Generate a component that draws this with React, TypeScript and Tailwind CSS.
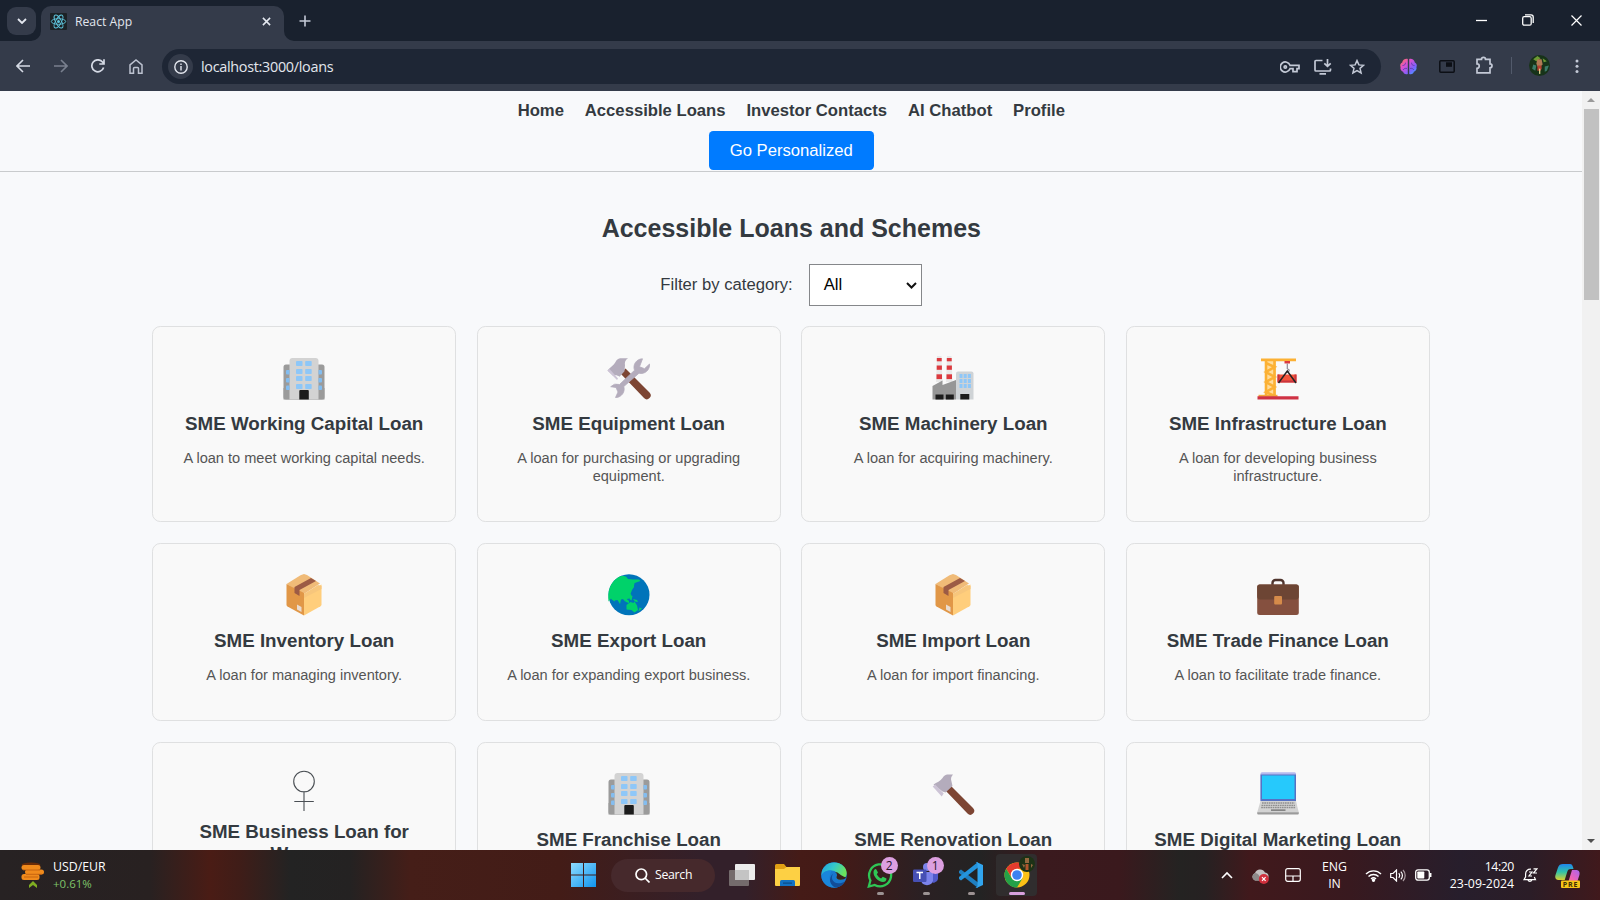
import type { ReactNode } from "react";

const UI = "font-['Open_Sans','Noto_Sans',sans-serif]";

/* ---------- card illustrations (42 x 42 box) ---------- */

function Art({ children }: { children: ReactNode }) {
  return (
    <svg viewBox="0 0 42 42" className="block h-[42px] w-[42px] overflow-visible">
      {children}
    </svg>
  );
}

function Office() {
  return (
    <Art>
      <rect x="0.5" y="6.5" width="41" height="35" rx="2.5" fill="#9b9b9b" />
      <path d="M0.5 30h41v11.5h-41z" fill="#9b9b9b" />
      <path d="M6.5 41.500V3a3 3 0 0 1 3-3h23a3 3 0 0 1 3 3v38.500z" fill="#d3d3d3" />
      {[3, 11, 18, 26].map((y) => (
        <g key={y} fill="#8ec7f8">
          <rect x="13" y={y} width="6.500" height="5" rx="0.800" />
          <rect x="22.200" y={y} width="6.500" height="5" rx="0.800" />
        </g>
      ))}
      {[12, 20, 27.5].map((y) => (
        <g key={y} fill="#83bdf0">
          <path d={`M6.500 ${y}H4a1 1 0 0 0-1 1v2.500a1 1 0 0 0 1 1h2.500z`} />
          <path d={`M35.500 ${y}H38a1 1 0 0 1 1 1v2.500a1 1 0 0 1-1 1h-2.500z`} />
        </g>
      ))}
      <path d="M16.300 41.500v-8.500a1 1 0 0 1 1-1h7.500a1 1 0 0 1 1 1v8.500z" fill="#1c1c1c" />
    </Art>
  );
}

function Tools() {
  return (
    <Art>
      <path d="M12.500 15.500l5-5 24 24a3.800 3.800 0 0 1-5.500 5.500z" fill="#7d4533" />
      <path d="M12 0.300h8c-3 2-3.500 4.500-3 7l-.500 6-5 5.500c-2-1.500-4-2-6.500-1L-.500 12.500c2.500-3 6.500-5.500 8-8.500 1-2 2.500-3.500 4.500-3.700z" fill="#b4acbc" />
      <path d="M-.5 12.500l2-1.500 8.500 9.500-1 1.500z" fill="#cdc4d6" />
      <path d="M34.500.8a8.500 8.500 0 0 0-8 11.500L11.500 26.500a8.300 8.300 0 0 0-8.800 2.200l5.300.800 2 4.500-2.500 5.500a8.500 8.500 0 0 0 8.300-11L31 15.200A8.500 8.500 0 0 0 41.500 6l-5 4.700-5-2z" fill="#b4acbc" stroke="#b4acbc" strokeWidth=".8" />
    </Art>
  );
}

function Factory() {
  return (
    <Art>
      <path d="M4 24L5-2h4.500l1 26zM14 24l1-26h4.500l1 26z" fill="#e9e9e9" />
      {[5, 15].map((x) => (
        <g key={x} fill="#dc3a3f">
          <rect x={x - 0.2} y="0" width="4.900" height="3.300" />
          <rect x={x - 0.3} y="7.500" width="5.200" height="4.300" />
          <rect x={x - 0.5} y="16.300" width="5.500" height="4.800" />
        </g>
      ))}
      <path d="M24 41.500V15.500a2 2 0 0 1 2-2h13.500a2 2 0 0 1 2 2v26z" fill="#cfd3d6" />
      <g fill="#8ec7f8">
        {[16, 21, 26].map((y) => (
          <g key={y}>
            <rect x="27.500" y={y} width="3" height="4" />
            <rect x="31.700" y={y} width="3" height="4" />
            <rect x="35.900" y={y} width="3" height="4" />
          </g>
        ))}
      </g>
      <path d="M.5 41.500V28l10-5.500v4.500l13.500-5v19.500z" fill="#969696" />
      <path d="M3.500 36.500h8v5h-8zM13.800 36.500h8v5h-8zM28.300 36h9v5.500h-9z" fill="#1c1c1c" />
    </Art>
  );
}

function Crane() {
  return (
    <Art>
      <path d="M8 2h11v37H8z" fill="#ffdc9a" />
      <path
        d="M9 2v36M17.500 2v36M9 5l8.500 4L9 14l8.500 5L9 24l8.500 5L9 34l8.500 4"
        fill="none"
        stroke="#fcb134"
        strokeWidth="2.600"
      />
      <path d="M4 .5h35v2.800H4z" fill="#fcb134" />
      <path d="M1.500 36.800h19v2h-19z" fill="#f3a83a" />
      <path d="M27.500 3h5.500v2.500h-5.500z" fill="#dc3a3f" />
      <path d="M30.300 5.500v5.500m0 0c3 0 2 4-1 3" stroke="#8e8794" strokeWidth="1.200" fill="none" />
      <path d="M20.500 16.500h19v8h-19z" fill="#f4553b" />
      <path d="M20.500 16.500h2v8h-2zM37.500 16.500h2v8h-2zM22.500 22.500h15v2h-15z" fill="#c9353f" />
      <path d="M21.500 25L30.300 13l8.700 12" stroke="#242424" strokeWidth="1.500" fill="none" />
      <path d="M.5 38.300h41v3.200H.5z" fill="#cf3244" />
    </Art>
  );
}

function Parcel() {
  return (
    <Art>
      <path d="M21 0l3 1 13 8.500L21 20 3.500 10l14-8.700z" fill="#f0bb78" />
      <path d="M3.500 10L21 19v22.500L4.500 32.500a2 2 0 0 1-1-1.700z" fill="#e19747" />
      <path d="M38.500 10.500L21 20v21.500l16.500-9.300a2 2 0 0 0 1-1.700z" fill="#ffce7c" />
      <path d="M28 4l5 3-16.500 9v6l-5-3v-6z" fill="#9c5b45" />
      <path d="M21 20l14-9 3.500 1v3L21 24z" fill="#f7c67c" />
      <path d="M14 30.500l4.500 2.500v5L14 35.500z" fill="#eadcd0" />
    </Art>
  );
}

function Globe() {
  return (
    <Art>
      <circle cx="21" cy="20.700" r="20.500" fill="#0074ba" />
      <path
        d="M10 3.500C13.500 1 17 2 18 2.500l2 2.500 5 .5 6 0 1.500 1.500-4.500 1.500-2 1 0 3.500-2 3-1.500 4 1 1-2 3.500-3 .5-1 3-2.500-3-2 .5-1 4.500-2.500-4-3 .5-3.500-2-2.500 3C-.5 17 2 8.500 10 3.500z"
        fill="#00d26a"
      />
      <path d="M25 8.500l1.500 1-1 4-1.500-1zM17.500 24l3.500 3v2l-3-1zM22 21l2.500 1-1 4.500-2-1.500zM2.500 24.500l5-1-1 4zM25 25l4 1 1 2-3-.5z" fill="#00d26a" />
      <path d="M18.500 31l4-3 3 1 1-1.500 2.500 4 1 4.500-3.500 2.500-3-2.500-5-.5zM31.500 33.500l2.500 1-3.500 3z" fill="#00d26a" />
    </Art>
  );
}

function Briefcase() {
  return (
    <Art>
      <path d="M15.500 12V9a3 3 0 0 1 3-3h5a3 3 0 0 1 3 3v3" fill="none" stroke="#50352e" strokeWidth="2.400" />
      <rect x=".2" y="10.500" width="41.600" height="30.500" rx="2.500" fill="#85503f" />
      <path d="M.2 13a2.500 2.500 0 0 1 2.500-2.500h36.600a2.500 2.500 0 0 1 2.500 2.500v9.500a3 3 0 0 1-3 3H3.200a3 3 0 0 1-3-3z" fill="#6d4534" />
      <rect x="17.200" y="22" width="7.800" height="8.500" rx="1" fill="#d68b4a" />
    </Art>
  );
}

function Female() {
  return (
    <Art>
      <g fill="none" stroke="#4a4f54" strokeWidth="1.100">
        <circle cx="21" cy="8.500" r="10.300" />
        <path d="M21 18.800V38M11.300 28.500h19.500" />
      </g>
    </Art>
  );
}

function Hammer() {
  return (
    <Art>
      <path d="M13 17l5.500-4.500L41 35a3.800 3.800 0 0 1-5.500 5.500z" fill="#7d4533" />
      <path d="M15 1.500h6c-2 2.500-2.500 4-1.500 7l1 4.500-7 6.500-3-1-9-7c3-2 7-3.500 9-6.500 1-2 2.500-3 4.500-3.500z" fill="#b4acbc" />
      <path d="M.7 13.500l2.500-2 8.500 9-2 3z" fill="#cdc4d6" />
    </Art>
  );
}

function Laptop() {
  return (
    <Art>
      <rect x="3.500" y="-.8" width="35.500" height="29" rx="1.500" fill="#b5b9ee" />
      <path d="M3.500 1.500H39V28H3.500z" fill="#5572c4" />
      <path d="M5 2.500h32.500V26H5z" fill="#26c9fc" />
      <path d="M3.500 28h35.500l2.800 11.500H.2z" fill="#d3d3d3" />
      <path d="M5 30h32.500M4.500 32.300h33.500M4.200 34.500h34" stroke="#8f8f8f" strokeWidth="1.300" strokeDasharray="1.700 .6" />
      <path d="M14 36.300h14.500v1.700H14z" fill="#858585" />
      <path d="M.2 39.300h41.600v1.200a1 1 0 0 1-1 1H1.200a1 1 0 0 1-1-1z" fill="#9b9b9b" />
    </Art>
  );
}

/* ---------- browser chrome ---------- */

function ReactLogo() {
  return (
    <svg viewBox="0 0 17 17" className="h-[17px] w-[17px]">
      <rect width="17" height="17" rx="1" fill="#1c2226" />
      <g fill="none" stroke="#5fc6de" strokeWidth=".9">
        <ellipse cx="8.500" cy="8.500" rx="7.200" ry="2.800" />
        <ellipse cx="8.500" cy="8.500" rx="7.200" ry="2.800" transform="rotate(60 8.500 8.500)" />
        <ellipse cx="8.500" cy="8.500" rx="7.200" ry="2.800" transform="rotate(120 8.500 8.500)" />
      </g>
      <circle cx="8.500" cy="8.500" r="1.500" fill="#5fc6de" />
    </svg>
  );
}

function TabStrip() {
  return (
    <div className="flex h-[41px] items-start bg-[#19212e]">
      <div className="ml-[7px] mt-[7px] flex h-[28px] w-[29px] items-center justify-center rounded-[9px] bg-[#343b4a]">
        <svg viewBox="0 0 10 6" className="h-[6px] w-[10px]" fill="none" stroke="#e4e8f0" strokeWidth="1.800">
          <path d="M1 1l4 4 4-4" />
        </svg>
      </div>
      <div className="relative ml-[5px] mt-[6px] flex h-[35px] w-[243px] items-center rounded-t-[10px] bg-[#343b4a] pb-[5px] pl-[9px]">
        <svg viewBox="0 0 10 10" className="absolute -left-[10px] bottom-0 h-[10px] w-[10px]">
          <path d="M10 0v10H0A10 10 0 0 0 10 0z" fill="#343b4a" />
        </svg>
        <svg viewBox="0 0 10 10" className="absolute -right-[10px] bottom-0 h-[10px] w-[10px]">
          <path d="M0 0v10h10A10 10 0 0 1 0 0z" fill="#343b4a" />
        </svg>
        <ReactLogo />
        <span className="ml-[8px] flex-1 pt-px text-[12.2px] leading-4 text-[#e3e6ee]">React App</span>
        <svg viewBox="0 0 10 10" className="mr-[13px] h-[9px] w-[9px]" stroke="#e4e8f0" strokeWidth="1.700">
          <path d="M1 1l8 8M9 1L1 9" />
        </svg>
      </div>
      <svg viewBox="0 0 12 12" className="ml-[15px] mt-[15px] h-[12px] w-[12px]" stroke="#c3c9d6" strokeWidth="1.600">
        <path d="M6 .5v11M.5 6h11" />
      </svg>
      <div className="ml-auto mr-[18px] mt-[14px] flex items-center">
        <svg viewBox="0 0 11 12" className="mr-[35px] h-[12px] w-[11px]" stroke="#fff" strokeWidth="1.300">
          <path d="M0 6.500h11" />
        </svg>
        <svg viewBox="0 0 12 12" className="mr-[37px] h-[12px] w-[12px]" fill="none" stroke="#fff" strokeWidth="1.300">
          <rect x=".7" y="2.700" width="8.500" height="8.500" rx="1.500" />
          <path d="M3 .8h6a2.200 2.200 0 0 1 2.200 2.200v6" />
        </svg>
        <svg viewBox="0 0 11 11" className="h-[11px] w-[11px]" stroke="#fff" strokeWidth="1.200">
          <path d="M.5.5l10 10M10.500.5l-10 10" />
        </svg>
      </div>
    </div>
  );
}

function Toolbar() {
  return (
    <div className="flex h-[50px] items-start bg-[#343b4a]">
      <div className="flex h-[50px] w-[162px] items-start pl-[16px] pt-[18px]">
        <svg viewBox="0 0 14 14" className="h-[14px] w-[14px]" fill="none" stroke="#d5dae5" strokeWidth="1.600">
          <path d="M14 7H1.500M7 1L1 7l6 6" />
        </svg>
        <svg viewBox="0 0 14 14" className="ml-[24px] h-[14px] w-[14px]" fill="none" stroke="#79808f" strokeWidth="1.600">
          <path d="M0 7h12.500M7 1l6 6-6 6" />
        </svg>
        <svg viewBox="0 0 14 14" className="ml-[23px] h-[14px] w-[14px]" fill="none" stroke="#d5dae5" strokeWidth="1.700">
          <path d="M12.600 8.500A6 6 0 1 1 11.500 3l1.500 1.800M13 .2V5H8.300" />
        </svg>
        <svg viewBox="0 0 14 15" className="ml-[24px] h-[15px] w-[14px]" fill="none" stroke="#bcc2d0" strokeWidth="1.500">
          <path d="M1 14.200V5.800L7 1l6 4.800v8.400H9.500V9.500a1 1 0 0 0-1-1h-3a1 1 0 0 0-1 1v4.700z" />
        </svg>
      </div>
      <div className="mt-[8px] flex h-[35px] w-[1219px] items-center rounded-full bg-[#1e2635] pl-[6px] pr-[16px]">
        <div className="flex h-[25px] w-[25px] items-center justify-center rounded-full bg-[#343b4a]">
          <svg viewBox="0 0 14 14" className="h-[14px] w-[14px]" fill="none" stroke="#e3e6ee" strokeWidth="1.400">
            <circle cx="7" cy="7" r="6.200" />
            <path d="M7 6v4.500M7 3.400v1.500" />
          </svg>
        </div>
        <span className="ml-[8px] text-[14.4px] leading-5 tracking-[-0.3px] text-[#e3e6ee]">localhost:3000/loans</span>
        <svg viewBox="0 0 20 12" className="ml-auto h-[12px] w-[20px]" fill="none" stroke="#c3c9d6" strokeWidth="1.700">
          <path d="M10 4.300A5 5 0 1 0 10 7.700h3v3h4v-3h2V4.300z" />
          <circle cx="5.300" cy="6" r="1.200" />
        </svg>
        <svg viewBox="0 0 18 16" className="ml-[14px] h-[16px] w-[18px]" fill="none" stroke="#c3c9d6" strokeWidth="1.700">
          <path d="M8.500 1.500H2a1 1 0 0 0-1 1V11a1 1 0 0 0 1 1h13.500a1 1 0 0 0 1-1V9.500M5.500 14.800h6.500M13.500 0v7M10.300 4.300l3.200 3 3.200-3" />
        </svg>
        <svg viewBox="0 0 16 16" className="ml-[17px] h-[16px] w-[16px]" fill="none" stroke="#c3c9d6" strokeWidth="1.500">
          <path d="M8 1.600l1.900 4.300 4.700.4-3.600 3 1.100 4.600L8 11.500l-4.100 2.400L5 9.300l-3.600-3 4.700-.4z" />
        </svg>
      </div>
      <svg viewBox="0 0 17 17" className="ml-[19px] mt-[17px] h-[17px] w-[17px]">
        <defs>
          <linearGradient id="brain" x1="0" y1="0" x2="1" y2="1">
            <stop offset="0" stopColor="#ff7a4d" />
            <stop offset=".35" stopColor="#dd4fd0" />
            <stop offset=".7" stopColor="#7a62ff" />
            <stop offset="1" stopColor="#35b4ff" />
          </linearGradient>
        </defs>
        <path d="M7.800 1v15c-2.500.8-4.500-.4-4.600-2.300C1 13 0 11 .6 9.200-.4 7 .6 5 2.200 4.400 2.400 1.800 5.500.2 7.800 1zM9.200 1v15c2.500.8 4.500-.4 4.600-2.300C16 13 17 11 16.400 9.200c1-2.200 0-4.200-1.600-4.800C14.600 1.800 11.500.2 9.200 1z" fill="url(#brain)" />
        <path d="M2.500 7.500c2 0 3-1 3-2.800M3 12c1-1.500 2.500-2 4-1.500M14.500 7.500c-2 0-3-1-3-2.800M14 12c-1-1.500-2.500-2-4-1.500" fill="none" stroke="#5b3fae" strokeWidth=".9" />
      </svg>
      <svg viewBox="0 0 16 13" className="ml-[22px] mt-[19px] h-[13px] w-[16px]">
        <rect x=".8" y=".8" width="14.400" height="11.400" rx="1" fill="none" stroke="#0c0f15" strokeWidth="1.500" />
        <path d="M7 2.300h6v4.500H7z" fill="#0c0f15" />
      </svg>
      <svg viewBox="0 0 18 18" className="ml-[20px] mt-[15px] h-[18px] w-[18px]" fill="none" stroke="#c3c9d6" strokeWidth="1.700">
        <path d="M2 3.300h4.500a2 2 0 0 1 4 0H15v4.500a2 2 0 0 1 0 4v5H2v-4.500a2.200 2.200 0 0 0 0-4.500z" />
      </svg>
      <div className="ml-[18px] mt-[16px] h-[17px] w-px bg-[#525a6b]" />
      <svg viewBox="0 0 20 20" className="ml-[17px] mt-[14px] h-[21px] w-[21px]">
        <circle cx="10" cy="10" r="10" fill="#173319" />
        <path d="M4 4l4-3 3 2-4 3zM13 3l4 3-3 1z" fill="#6d9a35" />
        <path d="M8 4h4l1 5-2 2H8L7 8z" fill="#b07a55" />
        <path d="M4 9l3 1-1 5-3-2zM15 11l4-1-2 5-2 1z" fill="#3c7b69" />
        <path d="M8 10h4v3l-1 2H8z" fill="#b43f31" />
        <path d="M9.500 13h1.300v5H9.500z" fill="#d9d08a" />
      </svg>
      <svg viewBox="0 0 4 15" className="ml-[25px] mt-[18px] h-[15px] w-[4px]" fill="#c3c9d6">
        <circle cx="2" cy="2" r="1.500" />
        <circle cx="2" cy="7.300" r="1.500" />
        <circle cx="2" cy="12.600" r="1.500" />
      </svg>
    </div>
  );
}

/* ---------- page ---------- */

const navItems = ["Home", "Accessible Loans", "Investor Contacts", "AI Chatbot", "Profile"];

type Loan = { icon: () => ReactNode; title: string; text: string; compact?: boolean };

const loans: Loan[] = [
  { icon: Office, title: "SME Working Capital Loan", text: "A loan to meet working capital needs." },
  { icon: Tools, title: "SME Equipment Loan", text: "A loan for purchasing or upgrading equipment." },
  { icon: Factory, title: "SME Machinery Loan", text: "A loan for acquiring machinery." },
  { icon: Crane, title: "SME Infrastructure Loan", text: "A loan for developing business infrastructure." },
  { icon: Parcel, title: "SME Inventory Loan", text: "A loan for managing inventory." },
  { icon: Globe, title: "SME Export Loan", text: "A loan for expanding export business." },
  { icon: Parcel, title: "SME Import Loan", text: "A loan for import financing." },
  { icon: Briefcase, title: "SME Trade Finance Loan", text: "A loan to facilitate trade finance." },
  { icon: Female, title: "SME Business Loan for Women", text: "", compact: true },
  { icon: Office, title: "SME Franchise Loan", text: "" },
  { icon: Hammer, title: "SME Renovation Loan", text: "" },
  { icon: Laptop, title: "SME Digital Marketing Loan", text: "" },
];

function LoanCard({ loan }: { loan: Loan }) {
  const Icon = loan.icon;
  return (
    <article className="flex flex-col items-center rounded-[8.3px] border border-[#dfe0e1] bg-[#f9f9f9] px-[26px] pt-[30.7px] text-center">
      <Icon />
      <h3 className={`${loan.compact ? "mt-[6px]" : "mt-[13.4px]"} text-[18.75px] leading-[22px] font-bold text-[#343a40]`}>
        {loan.title}
      </h3>
      <p className="mt-[15px] text-[14.58px] leading-[17.4px] text-[#555]">{loan.text}</p>
    </article>
  );
}

function Page() {
  return (
    <div className="flex h-[759px] overflow-hidden bg-[#f8f9fb] font-['Liberation_Sans',Arial,sans-serif] text-[#343a40]">
      <main className="flex min-w-0 flex-1 flex-col">
        <header className="flex h-[81px] shrink-0 flex-col items-center border-b border-[#c9cbcd] pt-[10px] pl-[0.6px]">
          <nav className="flex gap-[20.9px] text-[16.67px] leading-[20px] font-bold">
            {navItems.map((item) => (
              <a key={item}>{item}</a>
            ))}
          </nav>
          <button className="mt-[10px] h-[39px] w-[164.5px] shrink-0 rounded-[4.2px] bg-[#007bff] text-[16.67px] text-white">
            Go Personalized
          </button>
        </header>
        <h2 className="mt-[41px] pl-[0.6px] text-center text-[25px] leading-[30px] font-bold">Accessible Loans and Schemes</h2>
        <div className="mt-[21px] flex h-[42px] shrink-0 items-center justify-center gap-[16px] text-[16.67px]">
          <label className="pb-[2px]">Filter by category:</label>
          <div className="flex h-[42px] w-[113px] items-center justify-between border border-[#85878a] bg-white pl-[14px] pr-[4px] text-black">
            <span className="pb-[2px]">All</span>
            <svg viewBox="0 0 11 7" className="h-[7px] w-[11px]" fill="none" stroke="#111" strokeWidth="2">
              <path d="M1 1l4.500 4.500L10 1" />
            </svg>
          </div>
        </div>
        <section className="mx-auto mt-[20.4px] grid w-[1277.6px] grid-cols-4 grid-rows-[195.6px_178.4px_195px] gap-[20.6px]">
          {loans.map((loan) => (
            <LoanCard key={loan.title} loan={loan} />
          ))}
        </section>
      </main>
      <div className="flex w-[18px] flex-col items-center bg-[#f1f1f1]">
        <svg viewBox="0 0 8 4" className="mt-[7px] h-[4px] w-[8px]" fill="#9a9a9a">
          <path d="M0 4l4-4 4 4z" />
        </svg>
        <div className="mt-[7px] h-[191px] w-[15px] bg-[#c1c1c1]" />
        <svg viewBox="0 0 8 4" className="mt-auto mb-[7px] h-[4px] w-[8px]" fill="#505050">
          <path d="M0 0l4 4 4-4z" />
        </svg>
      </div>
    </div>
  );
}

/* ---------- taskbar ---------- */

function Slot({ children, dot, badge }: { children: ReactNode; dot?: boolean; badge?: string }) {
  return (
    <div className="relative flex h-[50px] w-[26px] shrink-0 items-center justify-center">
      {children}
      {dot && <span className="absolute bottom-[5px] left-[10px] h-[3px] w-[7px] rounded-full bg-[#9c9393]" />}
      {badge && (
        <span className="absolute left-[14px] top-[7px] flex h-[17px] w-[17px] items-center justify-center rounded-full bg-[#dc9fe0] text-[12px] leading-none text-[#28162c]">
          {badge}
        </span>
      )}
    </div>
  );
}

function Taskbar() {
  return (
    <footer className="flex h-[50px] items-center bg-[linear-gradient(90deg,#272223_0px,#282121_150px,#4a1c15_210px,#3f1d18_240px,#232323_290px,#242222_350px,#451e18_410px,#431c17_560px,#33202a_700px,#33202a_745px,#451b17_800px,#431a17_840px,#2b2023_920px,#232323_980px,#3a1a1e_1040px,#3a191d_1120px,#242322_1180px,#262122_1205px,#41191c_1250px,#38191f_1350px,#271e2c_1460px,#2b1d27_1530px,#40191c_1600px)] text-white">
      <div className="flex w-[571px] items-center pl-[21px]">
        <svg viewBox="0 0 24 26" className="h-[26px] w-[24px]">
          <ellipse cx="10" cy="3" rx="9.500" ry="2.600" fill="#6a2c08" />
          <g fill="#f08a1c">
            <rect x=".5" y="3" width="19" height="5" rx="2.500" />
            <rect x="4" y="7.500" width="19" height="5" rx="2.500" />
            <rect x=".5" y="12" width="18" height="6" rx="2.500" />
          </g>
          <path d="M2 8h17M5 12.300h16M3 15h14" stroke="#bd5c0c" strokeWidth=".8" />
          <path d="M8 26v-3l4-4 4 4v3l-4-3z" fill="#7fae22" />
        </svg>
        <div className="ml-[8px] flex flex-col text-[12.3px] leading-[17px]">
          <span>USD/EUR</span>
          <span className="text-[11.5px] text-[#7fc36a]">+0.61%</span>
        </div>
      </div>
      <svg viewBox="0 0 25 24" className="h-[24px] w-[25px] shrink-0">
        <defs>
          <linearGradient id="win" x1="0" y1="0" x2="1" y2="1">
            <stop offset="0" stopColor="#8fdcff" />
            <stop offset="1" stopColor="#0f94ee" />
          </linearGradient>
        </defs>
        <path d="M0 0h12v11.500H0zM13 0h12v11.500H13zM0 12.500h12V24H0zM13 12.500h12V24H13z" fill="url(#win)" />
      </svg>
      <div className="ml-[15px] flex h-[33px] w-[104px] shrink-0 items-center rounded-full bg-[#46292c] pl-[24px]">
        <svg viewBox="0 0 15 15" className="h-[15px] w-[15px]" fill="none" stroke="#fff" strokeWidth="1.700">
          <circle cx="6.300" cy="6.300" r="5.300" />
          <path d="M10 10l4.500 4.500" />
        </svg>
        <span className="ml-[5px] pt-[1px] text-[12.3px] tracking-[-0.3px]">Search</span>
      </div>
      <div className="ml-[14px] flex shrink-0 items-center gap-[19.9px]">
        <Slot>
          <svg viewBox="0 0 26 22" className="h-[22px] w-[26px]">
            <rect x="6" y="0" width="20" height="16" rx="1" fill="#ececec" />
            <rect x="0" y="6" width="20" height="16" rx="1" fill="#8b8483" fillOpacity=".75" />
            <path d="M6 6h14v10H6z" fill="#c4c4c4" />
          </svg>
        </Slot>
        <Slot>
          <svg viewBox="0 0 25 22" className="h-[22px] w-[25px]">
            <path d="M0 1.500A1.500 1.500 0 0 1 1.500 0H9l2.500 3H24a1 1 0 0 1 1 1v6H0z" fill="#e0a014" />
            <path d="M0 5h9l2.500-2H25v18a1 1 0 0 1-1 1H1a1 1 0 0 1-1-1z" fill="#fdd044" />
            <path d="M5 22v-4.500A1.500 1.500 0 0 1 6.500 16h12a1.500 1.500 0 0 1 1.500 1.500V22z" fill="#1272c4" />
            <path d="M8 18.500h9v1.200H8z" fill="#0a4a86" />
          </svg>
        </Slot>
        <Slot>
          <svg viewBox="0 0 26 26" className="h-[26px] w-[26px]">
            <defs>
              <linearGradient id="edgeA" x1="0" y1="0" x2="1" y2=".4">
                <stop offset="0" stopColor="#1fa0e0" />
                <stop offset=".5" stopColor="#34c8ca" />
                <stop offset="1" stopColor="#6be35b" />
              </linearGradient>
            </defs>
            <circle cx="13" cy="13" r="12.700" fill="#1878cf" />
            <path d="M.4 12C1 5 6.500.4 13 .4c7.500 0 12.700 5 12.700 10.600 0 4-3 6.500-6.500 6.500-3 0-4-1.200-3.500-2.200C17.500 12 15 8.500 10.500 8.500 5.500 8.500 1.500 10.500.4 14z" fill="url(#edgeA)" />
            <path d="M9 13.500c-1.500 5 2 11 8 11.500-9 2.500-16.500-4-16.600-11C1.500 9.500 6 8.300 10.500 8.500 9.600 10 9.300 12 9 13.500z" fill="#1a86db" />
            <path d="M12.300 11.500c-3 4-1 9.500 5 9.800 2.500.1 4.500-.5 6.500-2-2 4-5.500 6.200-9 6.200C9 24 6.500 16 12.300 11.500z" fill="#124d99" />
            <path d="M15.500 15c1-2 .5-4-1.500-5 4 0 4.500 3.500 11.300 5.500-1.500 2-4 2.300-6 2.200-3 0-4.200-1.300-3.800-2.700z" fill="#38231e" />
          </svg>
        </Slot>
        <Slot dot badge="2">
          <svg viewBox="0 0 26 26" className="h-[26px] w-[26px]">
            <path d="M1.800 24.500l1.600-6A11 11 0 1 1 7.700 22.900z" fill="none" stroke="#2fc655" strokeWidth="2.300" />
            <path d="M9 7l2 3.500-1.200 1.700c1 2 2.300 3.300 4.300 4.200l1.700-1.600 3.700 1.700c0 2.500-1.500 3.500-3.500 3.500C11 19.500 6.500 15 6.500 10.500 6.500 8.500 7.500 7 9 7z" fill="#2fc655" />
          </svg>
        </Slot>
        <Slot dot badge="1">
          <svg viewBox="0 0 26 26" className="h-[26px] w-[26px]">
            <circle cx="14" cy="5" r="4" fill="#7b83eb" />
            <path d="M17 10h8v7a4.500 4.500 0 0 1-8 2z" fill="#5059c9" />
            <path d="M8 10h12v8.500a6.200 6.200 0 0 1-12 0z" fill="#7b83eb" />
            <rect x="0" y="7.500" width="13.500" height="12.500" rx="1.200" fill="#4650b4" />
            <path d="M3.500 10.500h6.500M6.750 10.500v6.500" stroke="#fff" strokeWidth="1.500" />
          </svg>
        </Slot>
        <Slot dot>
          <svg viewBox="0 0 26 26" className="h-[26px] w-[26px]">
            <path d="M1 9l2-1.500L20 20.500V26L1 11z" fill="#1f7fc0" />
            <path d="M1 17l2 1.500L20 5.500V0L1 15z" fill="#2494dc" />
            <path d="M18.500 0L25 3v20l-6.500 3-1-1c1 .5 2-.2 2-1.300V2.300C19.500 1.200 18.500.5 17.500 1z" fill="#31a5ee" />
          </svg>
        </Slot>
      </div>
      <div className="relative ml-[12px] flex h-[42px] w-[41px] shrink-0 items-center justify-center rounded-[4px] bg-[#302d2e]">
        <svg viewBox="0 0 26 26" className="h-[26px] w-[26px]">
          <circle cx="13" cy="13" r="12.500" fill="#fbc116" />
          <path d="M2.200 6.700A12.500 12.500 0 0 1 23.800 6.700H13L8 16z" fill="#e33b2e" />
          <path d="M2.200 6.700A12.500 12.500 0 0 0 13 25.500l5.500-9.300L13 19 7.600 16z" fill="#24a148" />
          <circle cx="13" cy="13" r="6.200" fill="#fff" />
          <circle cx="13" cy="13" r="4.800" fill="#3b82f0" />
        </svg>
        <svg viewBox="0 0 16 16" className="absolute left-[23px] top-[2px] h-[16px] w-[16px]">
          <circle cx="8" cy="8" r="8" fill="#1d3216" />
          <path d="M6 2h4v5H6zM3 8l3 1-1 3zM12 8l2 1-2 3z" fill="#93683f" />
          <path d="M6.500 8h3v6h-3z" fill="#b0552d" />
        </svg>
        <span className="absolute bottom-[1px] left-[13px] h-[3px] w-[16px] rounded-full bg-[#d8a0dd]" />
      </div>
      <div className="ml-auto flex shrink-0 items-center">
        <svg viewBox="0 0 12 8" className="h-[8px] w-[12px]" fill="none" stroke="#fff" strokeWidth="1.600">
          <path d="M1 7l5-5 5 5" />
        </svg>
        <svg viewBox="0 0 18 15" className="ml-[18px] mt-[3px] h-[15px] w-[18px]">
          <path d="M4 11.500a4 4 0 0 1 0-7.500A5.500 5.500 0 0 1 14 3.500a4 4 0 0 1-1 8z" fill="#c4c0c0" />
          <path d="M4 11.500a4 4 0 0 1 0-7.500c3 0 5 3 6 7.500z" fill="#8e8989" />
          <circle cx="12.800" cy="10" r="5" fill="#d0303d" />
          <path d="M11 8.200l3.600 3.600M14.600 8.200L11 11.800" stroke="#fff" strokeWidth="1.200" />
        </svg>
        <svg viewBox="0 0 16 14" className="ml-[16px] h-[14px] w-[16px]" fill="none" stroke="#fff" strokeWidth="1.200">
          <rect x=".7" y=".7" width="14.600" height="12.600" rx="2" />
          <path d="M.7 8h14.600M8 8v5.300" />
        </svg>
        <div className="ml-[20px] flex w-[27px] flex-col items-center text-[12.3px] leading-[17px]">
          <span>ENG</span>
          <span>IN</span>
        </div>
        <svg viewBox="0 0 17 13" className="ml-[17px] h-[13px] w-[17px]" fill="none" stroke="#fff" strokeWidth="1.400">
          <path d="M1 5a10.500 10.500 0 0 1 15 0M3.500 7.600a7 7 0 0 1 10 0M6 10a3.600 3.600 0 0 1 5 0" />
          <circle cx="8.500" cy="11.300" r="1" fill="#fff" />
        </svg>
        <svg viewBox="0 0 16 13" className="ml-[8px] h-[13px] w-[16px]" fill="none" stroke="#fff" strokeWidth="1.200">
          <path d="M.7 4.500H3L6.500 1v11L3 8.500H.7zM8.700 4.300a3 3 0 0 1 0 4.400M10.800 2.600a5.500 5.500 0 0 1 0 7.800" />
          <path d="M13 1a8 8 0 0 1 0 11" stroke="#a99ba0" />
        </svg>
        <svg viewBox="0 0 17 12" className="ml-[9px] h-[12px] w-[17px]">
          <rect x=".7" y=".9" width="13.600" height="10.200" rx="2.300" fill="none" stroke="#fff" strokeWidth="1.300" />
          <rect x="2.300" y="2.500" width="7" height="7" rx=".8" fill="#fff" />
          <path d="M15.700 4v4" stroke="#fff" strokeWidth="1.500" />
        </svg>
        <div className="ml-[16px] flex w-[66px] flex-col items-end text-[12.3px] leading-[17px]">
          <span className="tracking-[-0.4px]">14:20</span>
          <span className="whitespace-nowrap">23-09-2024</span>
        </div>
        <svg viewBox="0 0 15 15" className="ml-[9px] h-[15px] w-[15px]" fill="none" stroke="#fff" strokeWidth="1.200">
          <path d="M8 1.200C4.500 1 2.600 3.200 2.600 6v2.800L1 11.700h11.500L11.300 9M5 12a2 2 0 0 0 3.800 0M6 4h3L6 8h3M10.500.8H14L10.500 5H14" />
        </svg>
        <svg viewBox="0 0 26 25" className="ml-[17px] mr-[19px] mt-[2px] h-[25px] w-[26px]">
          <defs>
            <linearGradient id="copA" x1="0" y1="0" x2="0" y2="1">
              <stop offset="0" stopColor="#1f86ee" />
              <stop offset=".5" stopColor="#31c3a8" />
              <stop offset="1" stopColor="#d9d030" />
            </linearGradient>
            <linearGradient id="copB" x1="1" y1="0" x2="0" y2="1">
              <stop offset="0" stopColor="#a765ef" />
              <stop offset=".5" stopColor="#ee62b8" />
              <stop offset="1" stopColor="#ff9448" />
            </linearGradient>
          </defs>
          <path d="M8 0h7c2 0 2.500 1.500 3 3l.5 2h-3c-2 0-2.700 1-3.300 3l-2.500 8H3.500C.5 16-.3 13.500.5 11L3 3.500C3.800 1 5.500 0 8 0z" fill="url(#copA)" />
          <path d="M17 6h4c3 0 4.200 2.200 3.400 5l-2.400 7.500c-.7 2.300-2 3.500-4.500 3.500H9.500c2 0 3-1 3.500-3z" fill="url(#copB)" />
          <rect x="6" y="16.500" width="19" height="7.500" rx="1" fill="#f5c518" />
          <text x="15.500" y="22.800" textAnchor="middle" fontSize="7" fontWeight="700" fill="#3b2c04" letterSpacing=".8">
            PRE
          </text>
        </svg>
      </div>
    </footer>
  );
}

export default function App() {
  return (
    <div className={`h-[900px] w-[1600px] overflow-hidden ${UI}`}>
      <TabStrip />
      <Toolbar />
      <Page />
      <Taskbar />
    </div>
  );
}
